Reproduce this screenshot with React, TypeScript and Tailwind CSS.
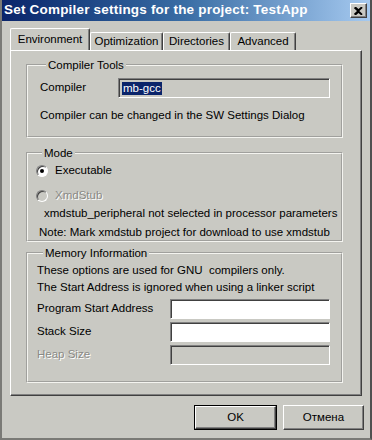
import React from "react";

const font = { fontFamily: '"Liberation Sans", Arial, sans-serif' };

function Tab({ label, active, w }: { label: string; active?: boolean; w: string }) {
  if (active) {
    return (
      <div
        className={`${w} h-[22px] -mb-[1px] z-10 relative flex items-center justify-center bg-[#c9c9c3] border-l border-t border-white border-r border-r-[#404040] shadow-[inset_-1px_0_0_#808080] rounded-tl-[2px] rounded-tr-[2px] text-[11.5px] text-black`}
      >
        {label}
      </div>
    );
  }
  return (
    <div
      className={`${w} h-[18px] self-end flex items-center justify-center bg-[#c9c9c3] border-l border-t border-white border-r border-r-[#404040] shadow-[inset_-1px_0_0_#808080] rounded-tl-[2px] rounded-tr-[2px] text-[11.5px] text-black`}
    >
      {label}
    </div>
  );
}

function Group({
  legend,
  className,
  children,
}: {
  legend: string;
  className?: string;
  children: React.ReactNode;
}) {
  return (
    <fieldset
      className={`border-2 [border-style:groove] border-[#f4f4f0] ${className ?? ""}`}
    >
      <legend className="ml-[6px] px-[2px] leading-[14px] text-[11.5px] text-black">{legend}</legend>
      {children}
    </fieldset>
  );
}

function Input({ gray, w, children }: { gray?: boolean; w: string; children?: React.ReactNode }) {
  return (
    <div
      className={`${w} h-[20px] border border-t-[#808080] border-l-[#808080] border-r-white border-b-white shadow-[inset_1px_1px_0_#404040] ${gray ? "bg-[#c9c9c3]" : "bg-white"} flex items-center pl-[3px]`}
    >
      {children}
    </div>
  );
}

function Radio({ checked, disabled }: { checked?: boolean; disabled?: boolean }) {
  return (
    <div
      className={`w-[12px] h-[12px] rounded-full border border-t-[#808080] border-l-[#808080] border-r-white border-b-white shadow-[inset_1px_1px_0_#404040] ${disabled ? "bg-[#c9c9c3]" : "bg-white"} flex items-center justify-center`}
    >
      {checked && <div className="w-[4px] h-[4px] rounded-full bg-black" />}
    </div>
  );
}

function Button({ label, def }: { label: string; def?: boolean }) {
  const inner = (
    <div className="w-full h-full flex items-center justify-center bg-[#c9c9c3] border border-t-white border-l-white border-r-[#404040] border-b-[#404040] shadow-[inset_-1px_-1px_0_#808080] text-[11.5px] text-black">
      {label}
    </div>
  );
  if (def) {
    return <div className="w-[83px] h-[25px] border border-black">{inner}</div>;
  }
  return <div className="w-[81px] h-[25px]">{inner}</div>;
}

export default function App() {
  return (
    <div
      style={font}
      className="w-[372px] h-[440px] bg-[#c9c9c3] border-l-2 border-l-[#7a7a76] border-r-2 border-r-[#505050] border-b-2 border-b-[#7a7a76] flex flex-col text-black overflow-hidden"
    >
      {/* Title bar */}
      <div className="h-[21px] bg-gradient-to-r from-[#0a246a] via-[#3a6ea5] to-[#a6caf0] flex items-center pl-[2px] pr-[3px]">
        <span className="text-white font-bold text-[13.5px] tracking-[0.2px] flex-1 whitespace-nowrap">
          Set Compiler settings for the project: TestApp
        </span>
        <div className="w-[17px] h-[15px] bg-[#c9c9c3] border border-t-white border-l-white border-r-[#404040] border-b-[#404040] shadow-[inset_-1px_-1px_0_#808080] flex items-center justify-center">
          <svg width="9" height="8" viewBox="0 0 9 8">
            <path d="M1 0 L4.5 3.2 L8 0 M1 8 L4.5 4.8 L8 8 M0.5 0.5 L8 7.5 M8 0.5 L0.5 7.5" stroke="black" strokeWidth="1.6" fill="none" />
          </svg>
        </div>
      </div>

      {/* Tabs */}
      <div className="flex pl-[8px] mt-[7px] h-[22px]">
        <Tab label="Environment" active w="w-[80px]" />
        <Tab label="Optimization" w="w-[73px]" />
        <Tab label="Directories" w="w-[67px]" />
        <Tab label="Advanced" w="w-[66px]" />
      </div>

      {/* Panel */}
      <div className="ml-[8px] w-[352px] h-[346px] border-l border-t border-white border-r border-r-[#404040] border-b border-b-[#404040] shadow-[inset_-1px_-1px_0_#808080] pl-[15px] pr-[18px]">
        <Group legend="Compiler Tools" className="mt-[7px] h-[80px] pl-[12px] pr-[11px]">
          <div className="flex items-center mt-[6px] text-[11.5px]">
            <span className="w-[78px]">Compiler</span>
            <Input gray w="w-[212px]">
              <span className="bg-[#0a246a] text-white text-[11.5px] leading-[13px] px-[1px]">mb-gcc</span>
            </Input>
          </div>
          <div className="mt-[10px] text-[11.5px] leading-[14px]">
            Compiler can be changed in the SW Settings Dialog
          </div>
        </Group>

        <Group legend="Mode" className="mt-[8px] h-[96px] pl-[8px] pr-[4px]">
          <div className="flex items-center mt-[4px] h-[14px] text-[11.5px]">
            <Radio checked />
            <span className="ml-[7px]">Executable</span>
          </div>
          <div className="flex items-center mt-[11px] h-[14px] text-[11.5px]">
            <Radio disabled />
            <span className="ml-[7px] text-[#8a8a86] [text-shadow:1px_1px_0_#ffffff]">XmdStub</span>
          </div>
          <div className="mt-[3px] pl-[8px] text-[11.5px] leading-[14px] whitespace-nowrap">
            xmdstub_peripheral not selected in processor parameters
          </div>
          <div className="mt-[5px] pl-[3px] text-[11.5px] leading-[14px] whitespace-nowrap">
            Note: Mark xmdstub project for download to use xmdstub
          </div>
        </Group>

        <Group legend="Memory Information" className="mt-[4px] h-[137px] pl-[9px] pr-[11px]">
          <div className="mt-[3px] text-[11.5px] leading-[14px]">These options are used for GNU&nbsp; compilers only.</div>
          <div className="mt-[3px] text-[11.5px] leading-[14px]">The Start Address is ignored when using a linker script</div>
          <div className="flex items-center mt-[5px] text-[11.5px]">
            <span className="w-[133px]">Program Start Address</span>
            <Input w="w-[160px]" />
          </div>
          <div className="flex items-center mt-[3px] text-[11.5px]">
            <span className="w-[133px]">Stack Size</span>
            <Input w="w-[160px]" />
          </div>
          <div className="flex items-center mt-[3px] text-[11.5px]">
            <span className="w-[133px] text-[#8a8a86] [text-shadow:1px_1px_0_#ffffff]">Heap Size</span>
            <Input gray w="w-[160px]" />
          </div>
        </Group>
      </div>

      {/* Buttons */}
      <div className="flex justify-end gap-[6px] mt-[9px] pr-[6px]">
        <Button label="OK" def />
        <Button label="Отмена" />
      </div>
    </div>
  );
}
